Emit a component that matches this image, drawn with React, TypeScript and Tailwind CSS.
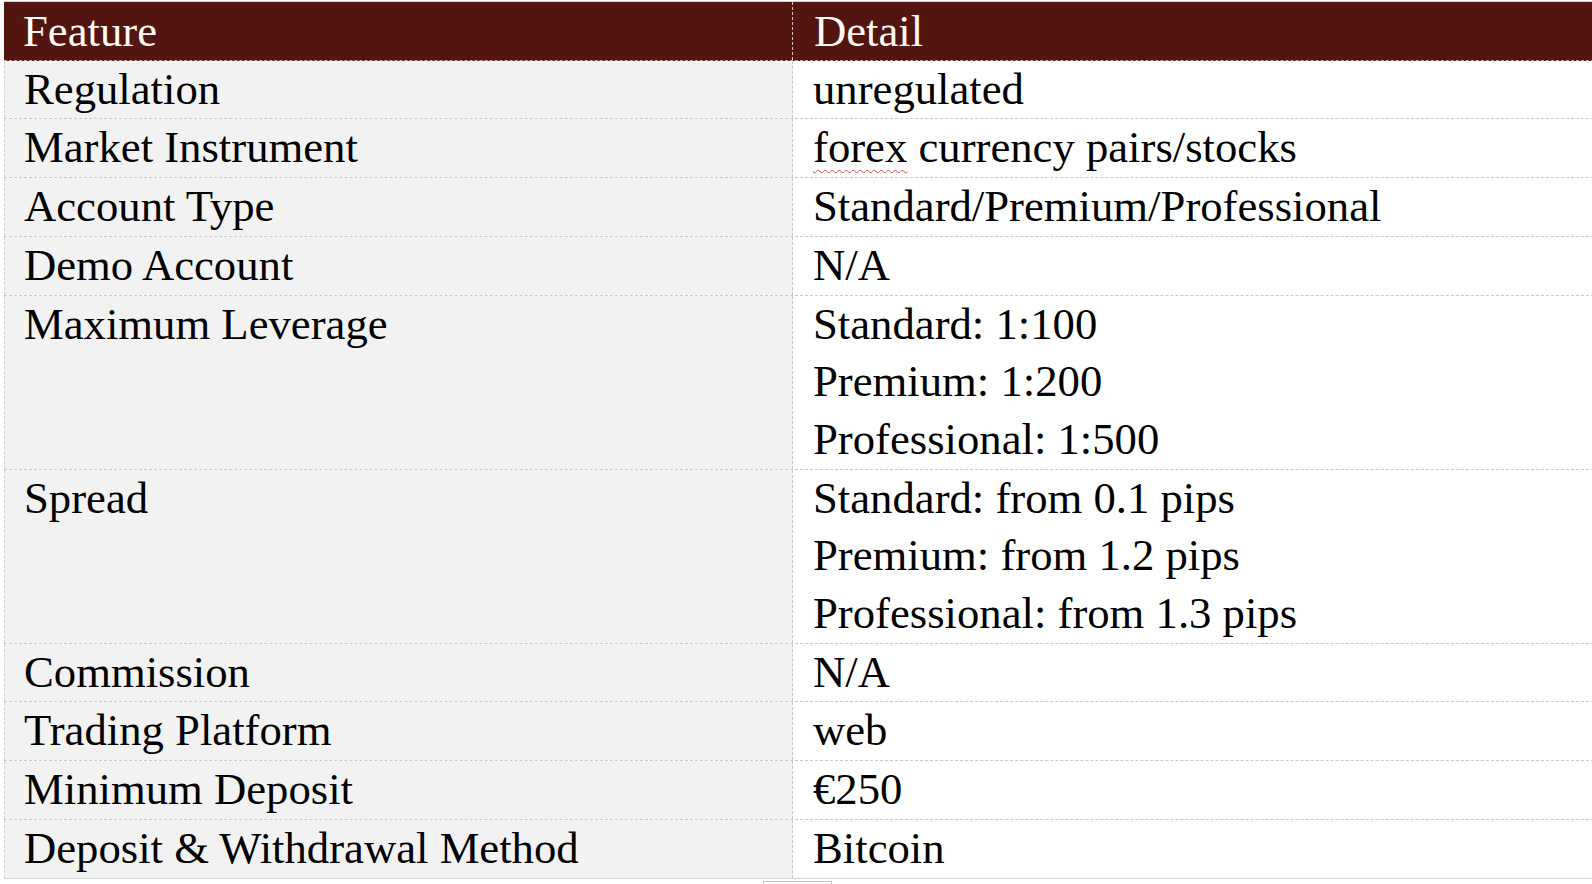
const rows: { feature: string; detail: React.ReactNode[] }[] = [
  { feature: "Regulation", detail: ["unregulated"] },
  {
    feature: "Market Instrument",
    detail: [
      <>
        <span className="underline decoration-wavy decoration-[#d04a4a] decoration-1 underline-offset-[7px]">
          forex
        </span>{" "}
        currency pairs/stocks
      </>,
    ],
  },
  { feature: "Account Type", detail: ["Standard/Premium/Professional"] },
  { feature: "Demo Account", detail: ["N/A"] },
  {
    feature: "Maximum Leverage",
    detail: ["Standard: 1:100", "Premium: 1:200", "Professional: 1:500"],
  },
  {
    feature: "Spread",
    detail: [
      "Standard: from 0.1 pips",
      "Premium: from 1.2 pips",
      "Professional: from 1.3 pips",
    ],
  },
  { feature: "Commission", detail: ["N/A"] },
  { feature: "Trading Platform", detail: ["web"] },
  { feature: "Minimum Deposit", detail: ["€250"] },
  { feature: "Deposit & Withdrawal Method", detail: ["Bitcoin"] },
];

export default function App() {
  return (
    <div className="w-[1592px] h-[884px] overflow-hidden bg-white font-['Liberation_Serif','Times_New_Roman',serif] text-[44.7px] leading-[57.7px] text-black">
      <div className="ml-[4px] mt-px w-[1610px] border-t border-[#d9cfcf]">
        {/* Header */}
        <div className="flex bg-[#52150f] text-[#fffaf2] border-b border-dashed border-[#c9a8a4]">
          <div className="w-[789px] shrink-0 pl-[19px] pt-[2px] leading-[55.7px] border-r border-dashed border-[#d8c0bc]">
            Feature
          </div>
          <div className="flex-1 pl-[21px] pt-[2px] leading-[55.7px]">Detail</div>
        </div>

        {/* Rows */}
        {rows.map((r, i) => (
          <div
            key={r.feature}
            className={`flex border-b ${
              i === rows.length - 1
                ? "border-solid border-[#d4d4d4]"
                : "border-dashed border-[#c8c8c8]"
            }`}
          >
            <div className="w-[789px] shrink-0 bg-[#f2f2f2] pl-[19px] border-l border-l-[#d8d8d8] border-r border-dashed border-r-[#c8c8c8]">
              {r.feature}
            </div>
            <div className="flex-1 bg-white pl-[20px]">
              {r.detail.map((d, j) => (
                <div key={j}>{d}</div>
              ))}
            </div>
          </div>
        ))}
      </div>
      <div className="ml-[763px] mt-[2px] w-[69px] h-[20px] border-x border-t border-[#c4c4c4] bg-white" />
    </div>
  );
}
